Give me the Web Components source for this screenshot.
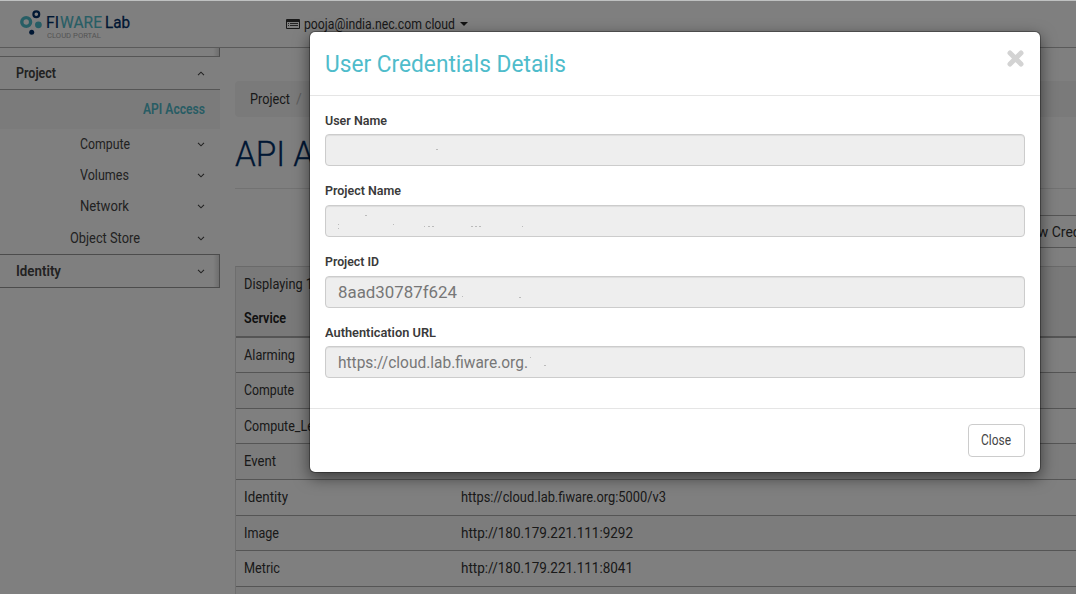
<!DOCTYPE html>
<html lang="en">
<head>
<meta charset="utf-8">
<title>FIWARE Lab Cloud Portal</title>
<style>
html,body{margin:0;height:100%;overflow:hidden;background:#fff}
body{font:14px/20px Roboto,"Liberation Sans",sans-serif;color:#333}
</style>
</head>
<body>
<portal-app></portal-app>
<script>
const define = (name, html, setup) => customElements.define(name, class extends HTMLElement {
  constructor(){
    super();
    const t = document.createElement('template');
    t.innerHTML = html;
    this.attachShadow({mode:'open'}).append(document.importNode(t.content, true));
  }
  connectedCallback(){ if (setup) setup(this, this.shadowRoot); }
});

define('portal-app', `
<style>
:host{display:grid;grid-template-rows:48px 1fr;height:594px;width:1076px;overflow:hidden;position:relative;background:#fff}
.cols{display:grid;grid-template-columns:220px 1fr;gap:15px;min-width:0;min-height:0}
.backdrop{position:absolute;inset:1px 0 0 0;background:rgba(0,0,0,.5)}
credentials-dialog{position:absolute;left:309px;top:31px}
</style>
<portal-header></portal-header>
<div class="cols"><side-nav></side-nav><api-page></api-page></div>
<div class="backdrop"></div>
<credentials-dialog></credentials-dialog>`);

define('portal-header', `
<style>
:host{display:flex;align-items:flex-start;box-sizing:border-box;height:48px;border-top:1px solid #bfc1c1;border-bottom:1px solid #b4b4b4}
portal-logo{margin-left:19px;margin-top:8px;width:116px}
.user{display:flex;align-items:center;height:20px;margin:13px 0 0 151px;color:#333}
.list{margin-right:4px}
.caret{border:4px solid transparent;border-top-color:#222;border-bottom:0;margin-left:5px}
</style>
<portal-logo></portal-logo>
<div class="user">
<svg class="list" width="14" height="12" viewBox="0 0 14 12"><path fill="#333" fill-rule="evenodd" d="M1 1h12a1 1 0 0 1 1 1v8a1 1 0 0 1-1 1H1a1 1 0 0 1-1-1V2a1 1 0 0 1 1-1zM1 4v6h12V4z"/><path stroke="#333" d="M2 5.5h1M4 5.500h8M2 7.500h1M4 7.500h8" stroke-width=".9"/></svg>
<fit-text w="151">pooja@india.nec.com cloud</fit-text><span class="caret"></span></div>`);

define('portal-logo', `
<style>
:host{display:flex;height:32px}
svg{flex:none}
.words{margin-left:2px;margin-top:4px}
.name{font-size:17px;line-height:19px;height:19px;white-space:nowrap;display:flex;color:#002e67;-webkit-text-stroke:.2px}
.teal{color:#4fbccb;margin-left:1px}
.lab{margin-left:3px;-webkit-text-stroke:.3px}
.sub{font-size:7px;line-height:8px;margin:0 0 0 1px;color:#aaa}
</style>
<svg width="25" height="28" viewBox="0 0 25 28" fill="none"><circle cx="7.2" cy="13" r="4.4" stroke="#4fbccb" stroke-width="3.4"/><circle cx="17.3" cy="5.2" r="2.9" stroke="#002e67" stroke-width="2.2"/><circle cx="19.4" cy="15.8" r="3.4" fill="#4fbccb"/><circle cx="12.7" cy="23.3" r="2.5" fill="#002e67"/></svg>
<div class="words"><div class="name"><fit-text w="13">FI</fit-text><fit-text class="teal" w="42">WARE</fit-text><fit-text class="lab" w="25">Lab</fit-text></div>
<div class="sub"><fit-text w="54">CLOUD PORTAL</fit-text></div></div>`);

define('side-nav', `
<style>
:host{display:block;color:#444}
.stub{height:9px;box-sizing:border-box;border-bottom:1px solid #aaa;border-right:1px solid #999;background:linear-gradient(to left,#ddd,#fff 6px)}
side-item[head]{font-weight:600}
.active{display:flex;height:39px;box-sizing:border-box;background:#f7f7f7;justify-content:flex-end;align-items:center;padding:0 15px 1px 0;color:#50b9c8;font-weight:600}
.sub{height:125px;box-sizing:border-box;display:grid;grid-template-rows:31px 31px 32px 31px}
</style>
<div class="stub"></div>
<side-item head open style="--h:33px"><fit-text w="40">Project</fit-text></side-item>
<div class="active"><fit-text w="62">API Access</fit-text></div>
<div class="sub">
<side-item><fit-text w="50">Compute</fit-text></side-item>
<side-item><fit-text w="49">Volumes</fit-text></side-item>
<side-item><fit-text w="49">Network</fit-text></side-item>
<side-item><fit-text w="70">Object Store</fit-text></side-item>
</div>
<side-item head box style="--h:34px"><fit-text w="45">Identity</fit-text></side-item>`);

define('side-item', `
<style>
:host{display:flex;box-sizing:border-box;align-items:center;height:var(--h,31px);padding:0 15px 1px 0}
.label{flex:1;text-align:center;padding-left:12px}
:host([head]) .label{text-align:left;padding-left:15.5px}
:host([head]){border-bottom:1px solid #aaa;padding-bottom:0}
:host([box]){border-top:1px solid #999;border-right:1px solid #999;padding-right:14px;border-bottom-color:#999;background:linear-gradient(to left,#ddd,#fff 6px)}
:host([open]) svg{transform:scaleY(-1)}
</style>
<div class="label"><slot></slot></div>
<svg width="8" height="5" viewBox="0 0 8 5" fill="none"><path d="M1 .8 4 3.8 7 .8" stroke="#444" stroke-width="1.1"/></svg>`);

define('api-page', `
<style>
:host{display:block;min-width:0;overflow:hidden}
.crumb{display:flex;margin-top:33px;height:36px;align-items:center;background:#f5f5f5;border-radius:4px 0 0 4px;padding-left:15px}
.slash{color:#bbb;margin:0 8px 0 6px}
h1{font-size:35px;line-height:40px;font-weight:300;color:#002e67;margin:18px 0 0 0;height:53px;-webkit-text-stroke:.3px}
.tools{border-top:1px solid #e5e5e5;height:78px;box-sizing:border-box;padding-top:26px;display:flex;justify-content:flex-end}
.btn{border:1px solid #aaa;height:33px;box-sizing:border-box;display:flex;align-items:center;padding-left:12px;width:160px;margin-right:-75px}
</style>
<div class="crumb"><fit-text w="40">Project</fit-text><span class="slash">/</span><fit-text w="62">API Access</fit-text></div>
<h1><fit-text w="164">API Access</fit-text></h1>
<div class="tools"><div class="btn"><svg width="12" height="12" viewBox="0 0 12 12" style="margin-right:2px"><path d="M1 6q5-6 10 0-5 6-10 0z" fill="none" stroke="#333"/><circle cx="6" cy="6" r="2" fill="#333"/></svg><fit-text w="104">View Credentials</fit-text></div></div>
<endpoint-table></endpoint-table>`);

define('endpoint-table', `
<style>
:host{display:block;border-left:1px solid #ddd;border-top:1px solid #d4d4d4}
.head{background:#f2f2f2;border-bottom:2px solid #aaa;padding:6px 0 0 8px;height:63px}
.count{height:34px;line-height:22px}
.svc{font-weight:600;color:#222;line-height:22px}
.row{display:grid;grid-template-columns:217px 1fr;align-items:center;padding:0 0 1px 8px;box-sizing:border-box;border-bottom:1px solid #aaa}
.row:nth-child(even){background:#f9f9f9}
</style>
<div class="head"><div class="count"><fit-text w="69">Displaying 1</fit-text></div><div class="svc"><fit-text w="42">Service</fit-text></div></div>`,
(host, root) => {
  if (root.querySelector('.row')) return;
  [['Alarming',51,'',0,35],['Compute',50,'',0,36],['Compute_Legacy',96,'',0,35],['Event',32,'',0,36],
   ['Identity',44,'https://cloud.lab.fiware.org:5000/v3',205,36],['Image',35,'http://180.179.221.111:9292',172,35],
   ['Metric',36,'http://180.179.221.111:8041',172,36],['',0,'',0,36]].forEach(([n,w,u,uw,h]) => {
    const r = document.createElement('div');
    r.className = 'row';
    r.style.height = h + 'px';
    r.innerHTML = (n ? `<fit-text w="${w}">${n}</fit-text>` : '<span></span>') + (u ? `<fit-text w="${uw}">${u}</fit-text>` : '');
    root.append(r);
  });
});

define('credentials-dialog', `
<style>
:host{display:grid;grid-template-rows:64px 312px 64px;box-sizing:border-box;width:732px;height:442px;background:#fff;background-clip:padding-box;border:1px solid rgba(0,0,0,.3);border-radius:6px;box-shadow:0 5px 15px rgba(0,0,0,.5)}
header{display:flex;justify-content:space-between;padding:0 15px 0 14.5px;border-bottom:1px solid #e5e5e5;box-sizing:border-box}
h4{font-size:24px;font-weight:400;line-height:28px;color:#4fbccb;margin:18px 0 0}
.x{margin:18px 1px 0 0}
main{padding:15px 15px 0;display:grid;grid-template-rows:71px 71px 70px 71px;align-content:start}
footer{border-top:1px solid #e5e5e5;display:flex;justify-content:flex-end;padding:15px 15px 0}
.btn{box-sizing:border-box;width:57px;height:33px;border:1px solid #ccc;border-radius:4px;display:flex;align-items:center;justify-content:center;color:#444;padding:0 1px 1px 0}
</style>
<header><h4><fit-text w="241">User Credentials Details</fit-text></h4>
<svg class="x" width="17" height="17" viewBox="0 0 17 17"><path d="M3 3 14 14M14 3 3 14" stroke="#d3d3d3" stroke-width="5" stroke-linecap="round"/></svg></header>
<main>
<read-field><fit-text slot="label" w="62">User Name</fit-text>
<svg slot="mark" width="300" height="30" viewBox="0 0 300 30"><path d="M110 14.500h2" stroke="#bbb"/></svg></read-field>
<read-field up><fit-text slot="label" w="76">Project Name</fit-text>
<svg slot="mark" width="300" height="30" viewBox="0 0 300 30"><path d="M39 9.5h2M12 18.500h1M12 22.500h1M67 18.500h1M98 20.500h1M102 20.500h2M106 20.500h2M145 20.500h2M149 20.500h2M153 20.500h2M196 20.500h1" stroke="#bbb"/></svg></read-field>
<read-field up><fit-text slot="label" w="54">Project ID</fit-text><fit-text w="119">8aad30787f624</fit-text>
<svg slot="mark" width="300" height="30" viewBox="0 0 300 30"><path d="M136 19.500h1M193 20.500h2" stroke="#bbb"/></svg></read-field>
<read-field><fit-text slot="label" w="111">Authentication URL</fit-text><fit-text w="190">https://cloud.lab.fiware.org.</fit-text>
<svg slot="mark" width="300" height="30" viewBox="0 0 300 30"><path d="M204 10.500h1M218 18.500h2" stroke="#bbb"/></svg></read-field>
</main>
<footer><div class="btn"><fit-text w="30">Close</fit-text></div></footer>`);

define('read-field', `
<style>
:host{display:block}
.label{font-weight:600;font-size:13px;line-height:20px;height:23px;color:#3a3a3a}
:host([up]) .label{line-height:18px}
.box{box-sizing:border-box;height:32px;border:1px solid #ccc;border-radius:4px;background:#eee;box-shadow:inset 0 1px 1px rgba(0,0,0,.075);padding:2px 0 0 11.5px;display:flex;align-items:center;font-size:16px;color:#777;position:relative}
::slotted(svg){position:absolute;left:0;top:0}
</style>
<div class="label"><slot name="label"></slot></div>
<div class="box"><slot></slot><slot name="mark"></slot></div>`);

/* Sets a line of text to an exact advance width, given in pixels by w. */
define('fit-text', `
<style>
:host{display:inline-block;white-space:nowrap;text-align:left}
span{display:inline-block;transform-origin:0 50%}
</style>
<span><slot></slot></span>`, (host, root) => {
  const s = root.querySelector('span'), w = +host.getAttribute('w');
  const n = s.getBoundingClientRect().width;
  host.style.width = w + 'px';
  if (n) s.style.transform = 'scaleX(' + w / n + ')';
});
</script>
</body>
</html>
